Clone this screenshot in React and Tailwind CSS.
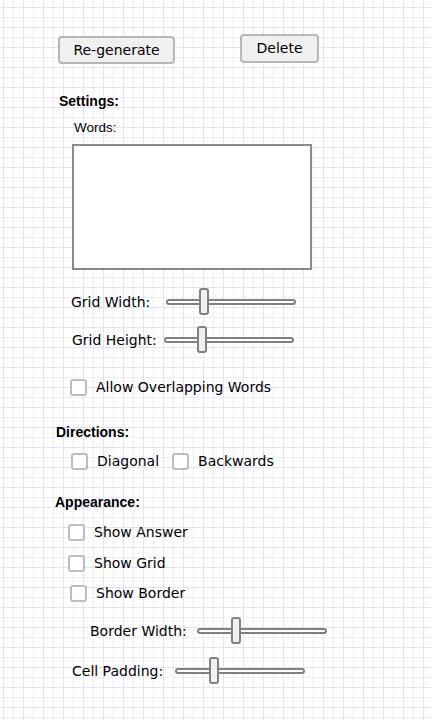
import React from 'react';

function Slider({ thumb }) {
    return (
        <div className="relative w-[130px] h-[28px] flex items-center">
            <div className="w-full h-[6px] border-2 border-[#808080] rounded-full bg-white"></div>
            <div className={`absolute top-0 ${thumb} w-[10px] h-[27px] border-2 border-[#808080] rounded-[3px] bg-[#f0f0f0]`}></div>
        </div>
    );
}

function Checkbox({ label, box = '', text = 'ml-[9px]' }) {
    return (
        <label className={`flex items-center h-[17px] ${box}`}>
            <span className="block w-[17px] h-[17px] border-2 border-[#bdbdbd] rounded-[3px] bg-white"></span>
            <span className={`${text} whitespace-nowrap`}>{label}</span>
        </label>
    );
}

function App() {
    const uiFont = "font-['DejaVu_Sans',Verdana,sans-serif] text-[14px] text-black";
    const headFont = "font-['Liberation_Sans',Arial,sans-serif] text-[14px] font-bold leading-[16px] h-[16px] text-black";

    return (
        <div className="min-h-[720px] w-full bg-white bg-[linear-gradient(to_right,#e3e2f9_1px,transparent_1px),linear-gradient(to_bottom,#e3e2f9_1px,transparent_1px),linear-gradient(to_right,#eeedfc_1px,transparent_1px),linear-gradient(to_bottom,#eeedfc_1px,transparent_1px)] bg-size-[20px_20px,20px_20px,10px_10px,10px_10px] bg-position-[3px_7px,3px_7px,3px_7px,3px_7px] pt-[34px] pb-[36px]">
            {/* buttons */}
            <div className={`flex items-start ${uiFont}`}>
                <button className="ml-[58px] mt-[2px] w-[117px] h-[28px] border-2 border-[#b8b8b8] rounded-[4px] bg-[#f0f0f0]">Re-generate</button>
                <button className="ml-[65px] w-[79px] h-[29px] border-2 border-[#b8b8b8] rounded-[4px] bg-[#f0f0f0]">Delete</button>
            </div>

            {/* settings */}
            <div className={`mt-[29px] ml-[59px] ${headFont}`}>Settings:</div>
            <div className="mt-[11px] ml-[74px] h-[16px] leading-[16px] font-['Liberation_Sans',Arial,sans-serif] text-[13.5px] text-black">Words:</div>
            <textarea className="block mt-[8px] ml-[72px] w-[240px] h-[126px] border-2 border-[#8a8a8a] bg-white resize-none outline-none"></textarea>

            <div className={`mt-[18px] flex items-center ${uiFont}`}>
                <span className="ml-[71px] w-[95px] whitespace-nowrap">Grid Width:</span>
                <Slider thumb="left-[33px]" />
            </div>
            <div className={`mt-[10px] flex items-center ${uiFont}`}>
                <span className="ml-[72px] w-[92px] whitespace-nowrap">Grid Height:</span>
                <Slider thumb="left-[33px]" />
            </div>

            <div className={`mt-[25px] ${uiFont}`}>
                <Checkbox label="Allow Overlapping Words" box="ml-[70px]" />
            </div>

            {/* directions */}
            <div className={`mt-[28px] ml-[56px] ${headFont}`}>Directions:</div>
            <div className={`mt-[13px] flex ${uiFont}`}>
                <Checkbox label="Diagonal" box="ml-[71px]" />
                <Checkbox label="Backwards" box="ml-[13px]" />
            </div>

            {/* appearance */}
            <div className={`mt-[24px] ml-[55px] ${headFont}`}>Appearance:</div>
            <div className={`mt-[14px] ${uiFont}`}>
                <Checkbox label="Show Answer" box="ml-[68px]" />
            </div>
            <div className={`mt-[14px] ${uiFont}`}>
                <Checkbox label="Show Grid" box="ml-[68px]" />
            </div>
            <div className={`mt-[13px] ${uiFont}`}>
                <Checkbox label="Show Border" box="ml-[70px]" />
            </div>

            <div className={`mt-[15px] flex items-center ${uiFont}`}>
                <span className="ml-[90px] w-[107px] whitespace-nowrap">Border Width:</span>
                <Slider thumb="left-[34px]" />
            </div>
            <div className={`mt-[12px] flex items-center ${uiFont}`}>
                <span className="ml-[72px] w-[103px] whitespace-nowrap">Cell Padding:</span>
                <Slider thumb="left-[34px]" />
            </div>
        </div>
    );
}

export default App;
